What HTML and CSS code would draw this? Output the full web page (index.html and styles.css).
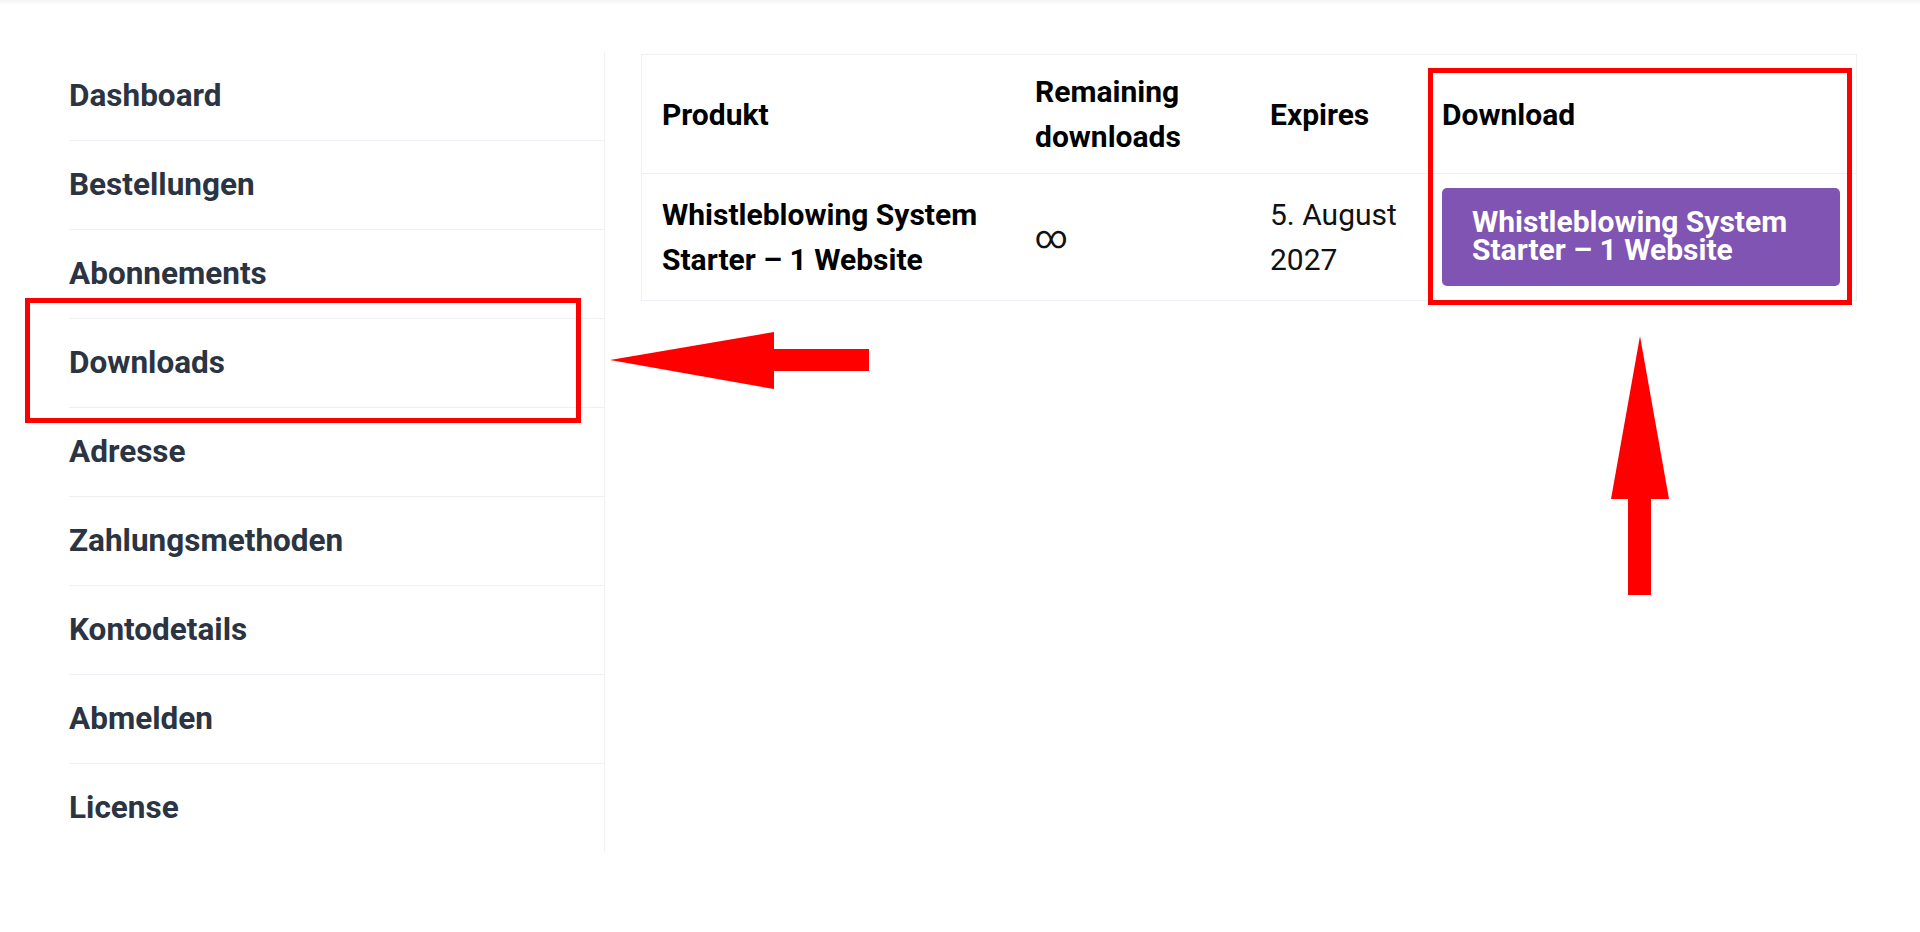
FILE: index.html
```html
<!DOCTYPE html>
<html>
<head>
<title>Mein Konto – Downloads</title>
<link rel="stylesheet" href="styles.css">
</head>
<body>
<div class="topline"></div>
<div class="account">
  <nav class="account-nav">
    <ul>
      <li><a href="#">Dashboard</a></li>
      <li><a href="#">Bestellungen</a></li>
      <li><a href="#">Abonnements</a></li>
      <li><a href="#">Downloads</a></li>
      <li><a href="#">Adresse</a></li>
      <li><a href="#">Zahlungsmethoden</a></li>
      <li><a href="#">Kontodetails</a></li>
      <li><a href="#">Abmelden</a></li>
      <li><a href="#">License</a></li>
    </ul>
  </nav>
  <div class="account-content">
    <table class="downloads">
      <colgroup>
        <col class="col-product">
        <col class="col-remaining">
        <col class="col-expires">
        <col class="col-download">
      </colgroup>
      <thead>
        <tr>
          <th>Produkt</th>
          <th>Remaining downloads</th>
          <th class="expires">Expires</th>
          <th>Download</th>
        </tr>
      </thead>
      <tbody>
        <tr>
          <td class="product">Whistleblowing System Starter – 1 Website</td>
          <td class="remaining">∞</td>
          <td class="expires">5. August 2027</td>
          <td class="download-file"><a class="button" href="#">Whistleblowing System Starter – 1 Website</a></td>
        </tr>
      </tbody>
    </table>
  </div>
</div>

<!-- annotations drawn over the page -->
<div class="mark mark-nav"></div>
<div class="mark mark-col"></div>
<svg class="arrow arrow-left" width="260" height="60" viewBox="0 0 260 60">
  <polygon points="0,29 164,1 164,18 259,18 259,40 164,40 164,58" fill="#ff0000"/>
</svg>
<svg class="arrow arrow-up" width="60" height="260" viewBox="0 0 60 260">
  <polygon points="30,0 59,163 41,163 41,259 18,259 18,163 1,163" fill="#ff0000"/>
</svg>
</body>
</html>
```

FILE: styles.css
```css
body {
  margin: 0;
  font-family: Roboto, "Liberation Sans", sans-serif;
  background-color: #fff;
}

.topline {
  height: 4px;
  background: linear-gradient(#f3f3f3, #fdfdfd);
}

.account {
  display: flex;
  align-items: flex-start;
  padding-top: 48px;
}

.account-nav {
  width: 535px;
  margin-left: 69px;
  border-right: 1px solid #f0f1f4;
}

.account-nav ul {
  list-style: none;
  margin: 0;
  padding: 0;
}

.account-nav li {
  border-bottom: 1px solid #eef0f5;
}

.account-nav li:last-child {
  border-bottom: none;
}

.account-nav a {
  display: block;
  padding: 21px 0 21px;
  font-size: 31.5px;
  line-height: 46px;
  font-weight: 700;
  color: #2b3442;
  text-decoration: none;
}

.account-content {
  margin-left: 36px;
  margin-top: 2px;
}

.downloads {
  width: 1216px;
  table-layout: fixed;
  border-collapse: separate;
  border-spacing: 0;
  border: 1px solid #eef0f5;
  font-size: 30px;
  line-height: 45px;
  color: #111;
}

.col-product { width: 373px; }
.col-remaining { width: 237px; }
.col-expires { width: 170px; }
.col-download { width: 434px; }

.downloads th {
  text-align: left;
  font-weight: 700;
  color: #000;
  padding: 14px 20px;
  vertical-align: middle;
  border-bottom: 1px solid #eef0f5;
}

.downloads td {
  padding: 14px 20px;
  vertical-align: middle;
}

.downloads .expires {
  padding-left: 18px;
  padding-right: 6px;
}

.downloads .product {
  font-weight: 700;
  color: #000;
}

.downloads .remaining {
  font-size: 32px;
}

.downloads .download-file {
  padding-right: 16px;
}

.button {
  display: block;
  padding: 19.5px 30px 22px;
  background-color: #7f54b3;
  border-radius: 5px;
  color: #fff;
  font-weight: 700;
  line-height: 28.3px;
  text-decoration: none;
}

.mark {
  position: absolute;
  border: 5px solid #ff0000;
  box-sizing: border-box;
}

.mark-nav {
  left: 25px;
  top: 298px;
  width: 556px;
  height: 125px;
}

.mark-col {
  left: 1428px;
  top: 68px;
  width: 424px;
  height: 237px;
}

.arrow {
  position: absolute;
}

.arrow-left {
  left: 610px;
  top: 331px;
}

.arrow-up {
  left: 1610px;
  top: 336px;
}
```
